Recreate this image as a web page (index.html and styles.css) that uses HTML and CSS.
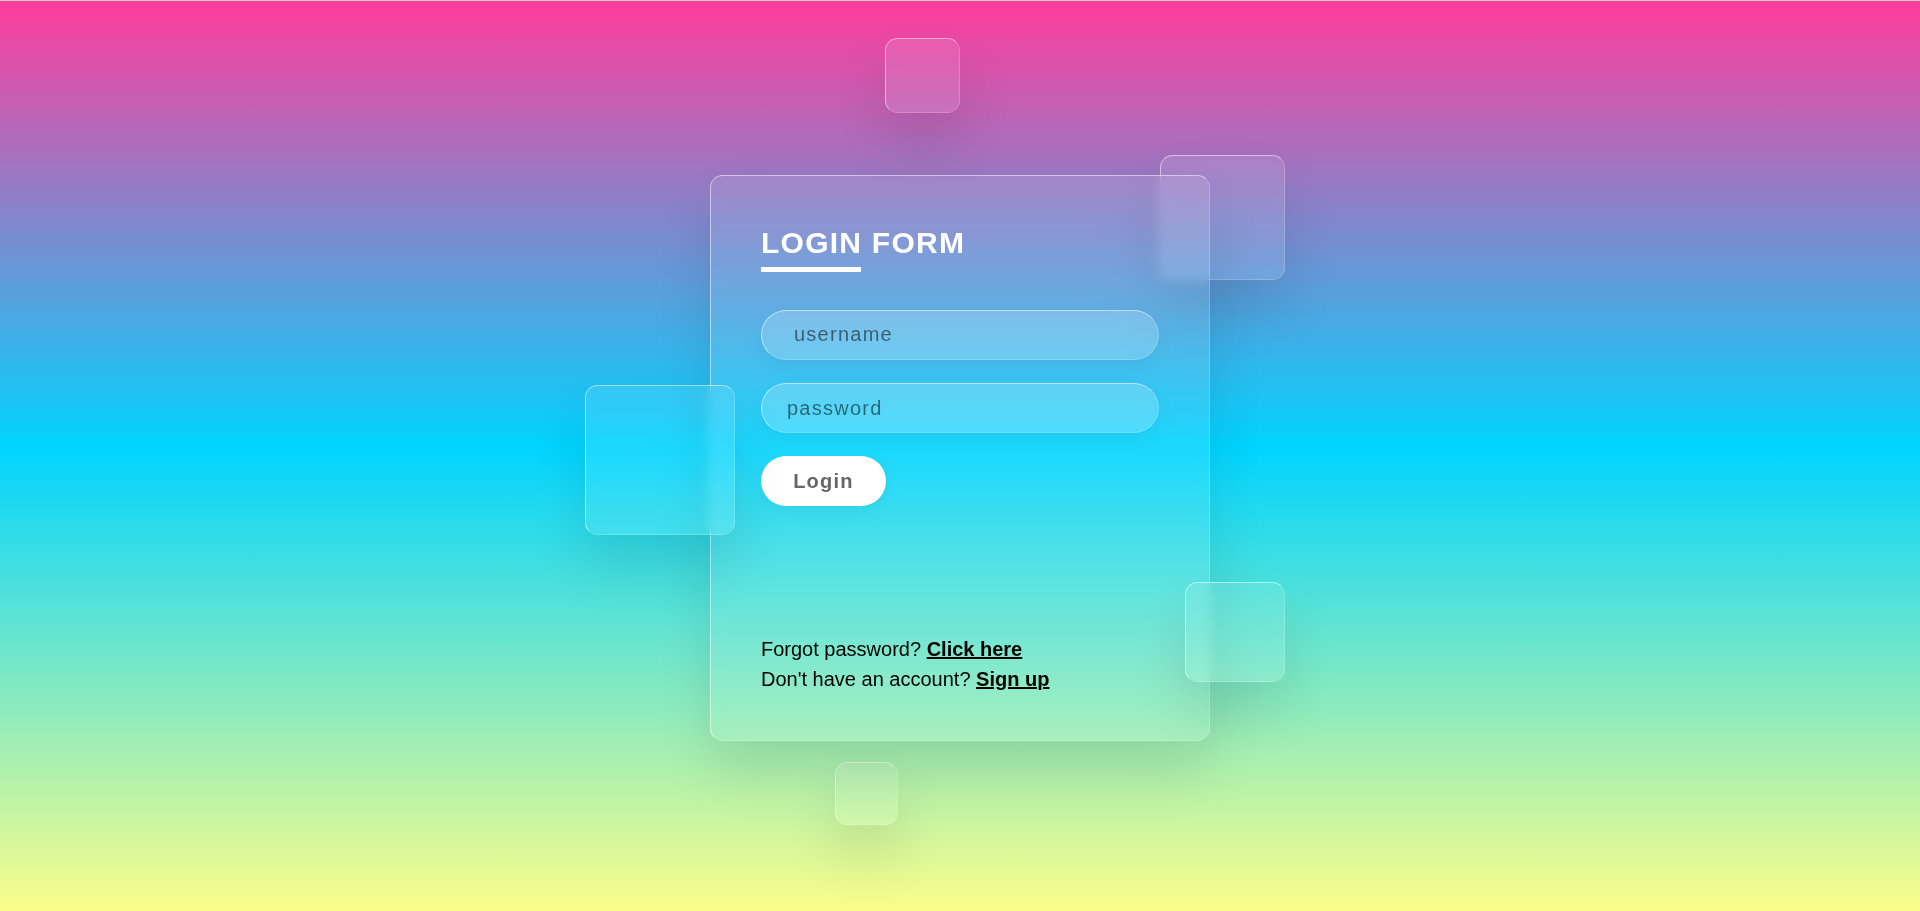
FILE: index.html
```html
<!DOCTYPE html>
<html lang="en">
<head>
<meta charset="utf-8">
<title>Login Form</title>
<link rel="stylesheet" href="styles.css">
</head>
<body>
  <div class="scene">
    <div class="square sq-top-right"></div>
    <div class="square sq-left"></div>
    <div class="square sq-bottom-right"></div>
    <div class="square sq-bottom"></div>
    <div class="square sq-top"></div>
    <div class="card">
      <form class="form">
        <h2 class="title">LOGIN FORM</h2>
        <input class="field field-user" type="text" placeholder="username">
        <input class="field field-pass" type="password" placeholder="password">
        <input class="btn" type="submit" value="Login">
        <div class="links">
          <p class="link-line">Forgot password? <a href="#">Click here</a></p>
          <p class="link-line second">Don't have an account? <a href="#">Sign up</a></p>
        </div>
      </form>
    </div>
  </div>
</body>
</html>
```

FILE: styles.css
```css
* {
  box-sizing: border-box;
}

html {
  background: #cfcfcf;
}

body {
  margin: 1px 0 0;
  height: 910px;
  overflow: hidden;
  font-family: "Liberation Sans", Arial, sans-serif;
  background: linear-gradient(to bottom, #ff3c9c 0%, #00d4ff 49%, #fbfd8a 100%);
  display: flex;
  justify-content: center;
  padding-top: 174px;
}

.scene {
  position: relative;
  width: 500px;
  height: 566px;
}

.square {
  position: absolute;
  background: rgba(255, 255, 255, 0.1);
  backdrop-filter: blur(6px);
  -webkit-backdrop-filter: blur(6px);
  border-radius: 12.5px;
  border: 1px solid rgba(255, 255, 255, 0.5);
  border-right-color: rgba(255, 255, 255, 0.2);
  border-bottom-color: rgba(255, 255, 255, 0.2);
  box-shadow: 0 31px 56px rgba(0, 0, 0, 0.1);
}

.sq-top-right {
  top: -20px;
  right: -75px;
  width: 125px;
  height: 125px;
}

.sq-left {
  top: 210px;
  left: -125px;
  width: 150px;
  height: 150px;
  z-index: 2;
}

.sq-bottom-right {
  top: 407px;
  right: -75px;
  width: 100px;
  height: 100px;
  z-index: 2;
}

.sq-bottom {
  top: 587px;
  left: 125px;
  width: 62.5px;
  height: 62.5px;
}

.sq-top {
  top: -137px;
  left: 175px;
  width: 75px;
  height: 75px;
}

.card {
  position: relative;
  width: 500px;
  background: rgba(255, 255, 255, 0.1);
  backdrop-filter: blur(6px);
  -webkit-backdrop-filter: blur(6px);
  border-radius: 12.5px;
  border: 1px solid rgba(255, 255, 255, 0.5);
  border-right-color: rgba(255, 255, 255, 0.2);
  border-bottom-color: rgba(255, 255, 255, 0.2);
  box-shadow: 0 31px 56px rgba(0, 0, 0, 0.1);
}

.form {
  display: flex;
  flex-direction: column;
  align-items: flex-start;
  padding: 50px 50px 49px;
}

.title {
  position: relative;
  margin: 0 0 50px;
  color: #fff;
  font-size: 30px;
  line-height: 33.5px;
  font-weight: 700;
  letter-spacing: 1.25px;
}

.title::before {
  content: "";
  position: absolute;
  left: 0;
  bottom: -12.5px;
  width: 100px;
  height: 5px;
  background: #fff;
}

.field {
  display: block;
  width: 100%;
  height: 50px;
  margin: 0;
  padding: 0 25px;
  background: rgba(255, 255, 255, 0.2);
  outline: none;
  border-radius: 44px;
  border: 1px solid rgba(255, 255, 255, 0.5);
  border-right-color: rgba(255, 255, 255, 0.2);
  border-bottom-color: rgba(255, 255, 255, 0.2);
  font-family: "Liberation Sans", Arial, sans-serif;
  font-size: 20px;
  letter-spacing: 1.25px;
  color: #fff;
  box-shadow: 0 6px 19px rgba(0, 0, 0, 0.05);
}

.field::placeholder {
  color: rgba(0, 0, 0, 0.52);
}

.field-user {
  padding-left: 32px;
}

.field-pass {
  margin-top: 23.5px;
}

.btn {
  display: block;
  width: 125px;
  height: 50px;
  margin-top: 23px;
  padding: 0;
  border: none;
  border-radius: 44px;
  background: #fff;
  color: #666;
  font-family: "Liberation Sans", Arial, sans-serif;
  font-size: 20px;
  font-weight: 700;
  letter-spacing: 1.25px;
  cursor: pointer;
  box-shadow: 0 6px 19px rgba(0, 0, 0, 0.05);
}

.links {
  margin-top: 132px;
}

.link-line {
  margin: 0;
  font-size: 20px;
  line-height: 23px;
  color: #000;
}

.link-line.second {
  margin-top: 6.5px;
}

.link-line a {
  color: #000;
  font-weight: 700;
  text-decoration: underline;
}
```
